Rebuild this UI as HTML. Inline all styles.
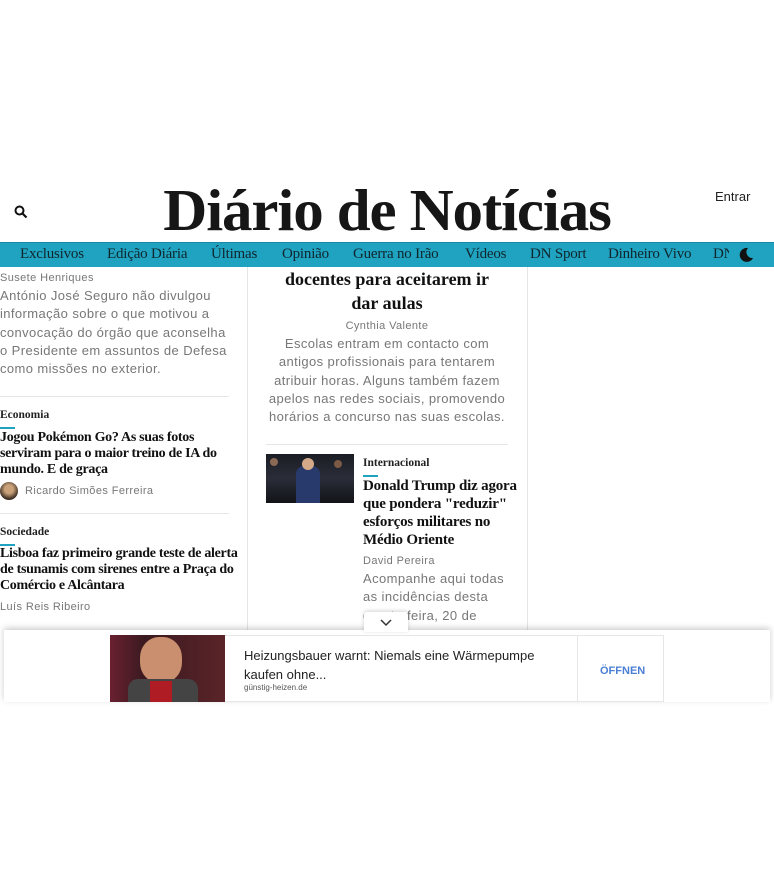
<!DOCTYPE html>
<html><head><meta charset="utf-8">
<style>
*{margin:0;padding:0;box-sizing:border-box}
body{width:774px;height:882px;background:#fff;position:relative;overflow:hidden;font-family:"Liberation Sans",sans-serif}
.abs{position:absolute}
.logo{left:160px;top:180px;width:454px;height:60px;font-family:"Liberation Serif",serif;font-weight:bold;font-size:54px;color:#161616;text-align:center;line-height:60px;white-space:nowrap;letter-spacing:-1px;transform:scale(1.13,1.1)}
.nav{left:0;top:242px;width:774px;height:25px;background:#1fa3c0;border-top:1px solid #168aa4}
.nav span{position:absolute;top:3px;font-family:"Liberation Serif",serif;font-size:15px;color:#10252c;letter-spacing:-0.2px;white-space:nowrap}
.serif{font-family:"Liberation Serif",serif;color:#111}
.gray{color:#777;font-family:"Liberation Sans",sans-serif;letter-spacing:0.4px}
.cat{font-family:"Liberation Serif",serif;font-weight:bold;font-size:11.5px;color:#222}
.bar{width:15px;height:2px;background:#1fa3c0}
.hl{font-family:"Liberation Serif",serif;font-weight:bold;font-size:14px;line-height:16px;color:#111;white-space:nowrap;letter-spacing:-0.3px}
.hr{height:1px;background:#e6e6e6}
</style></head><body>
<svg class="abs" style="left:14px;top:205px" width="14" height="14" viewBox="0 0 14 14"><circle cx="5.5" cy="5.5" r="4" fill="none" stroke="#111" stroke-width="2"/><path d="M8.5 8.5L12.5 12.5" stroke="#111" stroke-width="2.2"/></svg>
<div class="abs logo">Diário de Notícias</div>
<div class="abs" style="left:715px;top:189px;font-size:13px;color:#222">Entrar</div>
<div class="abs nav">
<span style="left:20px">Exclusivos</span><span style="left:107px">Edição Diária</span><span style="left:211px">Últimas</span><span style="left:282px">Opinião</span><span style="left:353px">Guerra no Irão</span><span style="left:465px">Vídeos</span><span style="left:530px">DN Sport</span><span style="left:608px">Dinheiro Vivo</span><span style="left:713px;width:16px;overflow:hidden">DN</span>
<svg style="position:absolute;left:738px;top:4px" width="16" height="16" viewBox="0 0 16 16"><path d="M10 1A7 7 0 1 0 15 11A6 6 0 0 1 10 1Z" fill="#111"/></svg>
</div>
<div class="abs" style="left:247px;top:267px;width:1px;height:363px;background:#e6e6e6"></div>
<div class="abs" style="left:527px;top:267px;width:1px;height:363px;background:#e6e6e6"></div>
<!-- left column -->
<div class="abs gray" style="left:0;top:272px;font-size:11px">Susete Henriques</div>
<div class="abs gray" style="left:0;top:287px;width:235px;font-size:13px;line-height:18.3px">António José Seguro não divulgou informação sobre o que motivou a convocação do órgão que aconselha o Presidente em assuntos de Defesa como missões no exterior.</div>
<div class="abs hr" style="left:0;top:396px;width:229px"></div>
<div class="abs cat" style="left:0;top:409px">Economia</div>
<div class="abs bar" style="left:0;top:427px"></div>
<div class="abs hl" style="left:0;top:430px">Jogou Pokémon Go? As suas fotos<br>serviram para o maior treino de IA do<br>mundo. E de graça</div>
<div class="abs" style="left:0;top:482px;width:18px;height:18px;border-radius:50%;background:radial-gradient(circle at 50% 40%,#c9a27a 30%,#3b2c20 70%)"></div>
<div class="abs gray" style="left:25px;top:485px;font-size:11px">Ricardo Simões Ferreira</div>
<div class="abs hr" style="left:0;top:513px;width:229px"></div>
<div class="abs cat" style="left:0;top:526px">Sociedade</div>
<div class="abs bar" style="left:0;top:544px"></div>
<div class="abs hl" style="left:0;top:546px">Lisboa faz primeiro grande teste de alerta<br>de tsunamis com sirenes entre a Praça do<br>Comércio e Alcântara</div>
<div class="abs gray" style="left:0;top:601px;font-size:11px">Luís Reis Ribeiro</div>
<!-- center -->
<div class="abs serif" style="left:266px;top:267px;width:242px;text-align:center;font-weight:bold;font-size:18px;line-height:24px">docentes para aceitarem ir<br>dar aulas</div>
<div class="abs gray" style="left:266px;top:320px;width:242px;text-align:center;font-size:11px">Cynthia Valente</div>
<div class="abs gray" style="left:266px;top:335px;width:242px;text-align:center;font-size:13px;line-height:18.3px">Escolas entram em contacto com antigos profissionais para tentarem atribuir horas. Alguns também fazem apelos nas redes sociais, promovendo horários a concurso nas suas escolas.</div>
<div class="abs hr" style="left:266px;top:444px;width:242px"></div>
<div class="abs" style="left:266px;top:454px;width:88px;height:49px;background:linear-gradient(180deg,#1b1d24 0%,#2a2d38 50%,#121318 100%);overflow:hidden">
<div style="position:absolute;left:30px;top:12px;width:24px;height:40px;background:#283a6b;border-radius:8px 8px 0 0"></div>
<div style="position:absolute;left:36px;top:4px;width:12px;height:12px;background:#d4a98a;border-radius:50%"></div>
<div style="position:absolute;left:4px;top:4px;width:8px;height:8px;background:#8a6a55;border-radius:50%"></div>
<div style="position:absolute;left:68px;top:6px;width:8px;height:8px;background:#7a5a45;border-radius:50%"></div>
</div>
<div class="abs cat" style="left:363px;top:457px">Internacional</div>
<div class="abs bar" style="left:363px;top:475px"></div>
<div class="abs serif" style="left:363px;top:477px;width:160px;font-weight:bold;font-size:15px;line-height:18px;letter-spacing:-0.2px">Donald Trump diz agora<br>que pondera "reduzir"<br>esforços militares no<br>Médio Oriente</div>
<div class="abs gray" style="left:363px;top:555px;font-size:11px">David Pereira</div>
<div class="abs gray" style="left:363px;top:570px;width:150px;font-size:13px;line-height:18.3px">Acompanhe aqui todas as incidências desta quarta-feira, 20 de</div>
<!-- ad -->
<div class="abs" style="left:4px;top:630px;width:766px;height:72px;background:#fff;box-shadow:0 -2px 6px rgba(0,0,0,.2)"></div>
<div class="abs" style="left:364px;top:612px;width:44px;height:20px;background:#fff;box-shadow:0 -1px 4px rgba(0,0,0,.18);border-radius:3px 3px 0 0"></div>
<svg class="abs" style="left:379px;top:618px" width="14" height="9" viewBox="0 0 14 9"><path d="M2 2L7 7L12 2" fill="none" stroke="#333" stroke-width="1.5"/></svg>
<div class="abs" style="left:110px;top:635px;width:554px;height:67px;border:1px solid #e6e6e6;background:#fff"></div>
<div class="abs" style="left:110px;top:635px;width:115px;height:67px;background:linear-gradient(90deg,#6a2030 0%,#3a1a20 30%,#5a2428 100%);overflow:hidden">
<div style="position:absolute;left:30px;top:2px;width:42px;height:46px;background:#c98f6e;border-radius:45%"></div>
<div style="position:absolute;left:18px;top:44px;width:70px;height:30px;background:#444;border-radius:10px 10px 0 0"></div>
<div style="position:absolute;left:40px;top:46px;width:22px;height:24px;background:#b01c24"></div>
</div>
<div class="abs" style="left:244px;top:646px;width:300px;font-size:13px;line-height:19px;color:#222">Heizungsbauer warnt: Niemals eine Wärmepumpe kaufen ohne...</div>
<div class="abs" style="left:244px;top:683px;font-size:8px;color:#555">günstig-heizen.de</div>
<div class="abs" style="left:577px;top:635px;width:1px;height:67px;background:#e6e6e6"></div>
<div class="abs" style="left:600px;top:665px;font-size:11px;color:#4a7fd4;font-weight:bold">ÖFFNEN</div>
</body></html>
